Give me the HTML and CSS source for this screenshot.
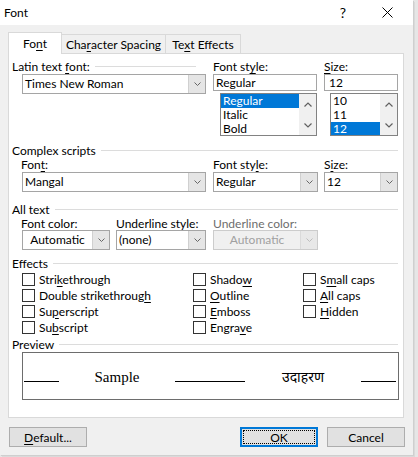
FILE: index.html
```html
<!DOCTYPE html>
<html>
<head>
<meta charset="utf-8">
<title>Font</title>
<link rel="stylesheet" href="styles.css">
</head>
<body>
<div class="window">
  <div class="titlebar">
    <span class="title">Font</span>
    <span class="help">?</span>
    <span class="close"><svg width="11" height="11" viewBox="0 0 11 11"><path d="M0.5 0.5 L10.5 10.5 M10.5 0.5 L0.5 10.5" stroke="#000" stroke-width="1" fill="none"/></svg></span>
  </div>

  <div class="tabs">
    <div class="tab active tab-font">Fo<u>n</u>t</div>
    <div class="tab tab-char">Cha<u>r</u>acter Spacing</div>
    <div class="tab tab-fx">Te<u>x</u>t Effects</div>
  </div>

  <div class="panel">
    <!-- Latin -->
    <div class="grid3 labels-row">
      <div class="hdr"><span>Latin text <u>f</u>ont:</span><span class="line line-latin"></span></div>
      <div>Font st<u>y</u>le:</div>
      <div class="lbl-size"><u>S</u>ize:</div>
    </div>
    <div class="grid3">
      <div>
        <div class="combo wide">
          <span class="val">Times New Roman</span>
          <span class="btn"><svg width="7" height="4" viewBox="0 0 7 4"><path d="M0.5 0.5 L3.5 3.5 L6.5 0.5" stroke="#666" fill="none"/></svg></span>
        </div>
      </div>
      <div>
        <div class="edit edit-style">Regular</div>
        <div class="list list-style">
          <div class="items">
            <div class="item sel">Regular</div>
            <div class="item">Italic</div>
            <div class="item">Bold</div>
          </div>
          <div class="sb">
            <svg width="8" height="5" viewBox="0 0 8 5"><path d="M0.5 4.5 L4 1 L7.5 4.5" stroke="#606060" stroke-width="1.2" fill="none"/></svg>
            <svg width="8" height="5" viewBox="0 0 8 5"><path d="M0.5 0.5 L4 4 L7.5 0.5" stroke="#606060" stroke-width="1.2" fill="none"/></svg>
          </div>
        </div>
      </div>
      <div>
        <div class="edit edit-size">12</div>
        <div class="list list-size">
          <div class="items">
            <div class="item">10</div>
            <div class="item">11</div>
            <div class="item sel">12</div>
          </div>
          <div class="sb">
            <svg width="8" height="5" viewBox="0 0 8 5"><path d="M0.5 4.5 L4 1 L7.5 4.5" stroke="#606060" stroke-width="1.2" fill="none"/></svg>
            <svg width="8" height="5" viewBox="0 0 8 5"><path d="M0.5 0.5 L4 4 L7.5 0.5" stroke="#606060" stroke-width="1.2" fill="none"/></svg>
          </div>
        </div>
      </div>
    </div>

    <!-- Complex scripts -->
    <div class="hdr sec sec-complex"><span>Complex scripts</span><span class="line"></span></div>
    <div class="grid3 sublabels">
      <div class="sub-a">Fon<u>t</u>:</div>
      <div>Font sty<u>l</u>e:</div>
      <div class="lbl-size">S<u>i</u>ze:</div>
    </div>
    <div class="grid3">
      <div>
        <div class="combo wide">
          <span class="val">Mangal</span>
          <span class="btn"><svg width="7" height="4" viewBox="0 0 7 4"><path d="M0.5 0.5 L3.5 3.5 L6.5 0.5" stroke="#666" fill="none"/></svg></span>
        </div>
      </div>
      <div>
        <div class="combo combo-style">
          <span class="val">Regular</span>
          <span class="btn"><svg width="7" height="4" viewBox="0 0 7 4"><path d="M0.5 0.5 L3.5 3.5 L6.5 0.5" stroke="#666" fill="none"/></svg></span>
        </div>
      </div>
      <div>
        <div class="combo combo-size">
          <span class="val">12</span>
          <span class="btn"><svg width="7" height="4" viewBox="0 0 7 4"><path d="M0.5 0.5 L3.5 3.5 L6.5 0.5" stroke="#666" fill="none"/></svg></span>
        </div>
      </div>
    </div>

    <!-- All text -->
    <div class="hdr sec sec-all"><span>All text</span><span class="line"></span></div>
    <div class="grid-all sublabels2">
      <div class="sub-a">Font <u>c</u>olor:</div>
      <div><u>U</u>nderline style:</div>
      <div class="disabled-lbl">Underline color:</div>
    </div>
    <div class="grid-all">
      <div>
        <div class="combo combo-color">
          <span class="val center">Automatic</span>
          <span class="btn"><svg width="7" height="4" viewBox="0 0 7 4"><path d="M0.5 0.5 L3.5 3.5 L6.5 0.5" stroke="#666" fill="none"/></svg></span>
        </div>
      </div>
      <div>
        <div class="combo combo-ul">
          <span class="val">(none)</span>
          <span class="btn"><svg width="7" height="4" viewBox="0 0 7 4"><path d="M0.5 0.5 L3.5 3.5 L6.5 0.5" stroke="#666" fill="none"/></svg></span>
        </div>
      </div>
      <div>
        <div class="combo combo-ulc disabled">
          <span class="val center">Automatic</span>
          <span class="btn"><svg width="7" height="4" viewBox="0 0 7 4"><path d="M0.5 0.5 L3.5 3.5 L6.5 0.5" stroke="#bdbdbd" fill="none"/></svg></span>
        </div>
      </div>
    </div>

    <!-- Effects -->
    <div class="hdr sec sec-fx"><span>Effects</span><span class="line"></span></div>
    <div class="effects">
      <label class="cb"><span class="box"></span><span>Stri<u>k</u>ethrough</span></label>
      <label class="cb"><span class="box"></span><span>Shado<u>w</u></span></label>
      <label class="cb"><span class="box"></span><span>S<u>m</u>all caps</span></label>
      <label class="cb"><span class="box"></span><span>Double strikethroug<u>h</u></span></label>
      <label class="cb"><span class="box"></span><span><u>O</u>utline</span></label>
      <label class="cb"><span class="box"></span><span><u>A</u>ll caps</span></label>
      <label class="cb"><span class="box"></span><span>Su<u>p</u>erscript</span></label>
      <label class="cb"><span class="box"></span><span><u>E</u>mboss</span></label>
      <label class="cb"><span class="box"></span><span><u>H</u>idden</span></label>
      <label class="cb"><span class="box"></span><span>Su<u>b</u>script</span></label>
      <label class="cb"><span class="box"></span><span>Engra<u>v</u>e</span></label>
      <span></span>
    </div>

    <!-- Preview -->
    <div class="hdr sec sec-prev"><span>Preview</span><span class="line"></span></div>
    <div class="preview">
      <span class="ul ul-short"></span>
      <span class="ptext latin">Sample</span>
      <span class="ul ul-long"></span>
      <span class="ptext deva">उदाहरण</span>
      <span class="ul ul-short"></span>
    </div>
  </div>

  <div class="buttons">
    <div class="button"><span><u>D</u>efault...</span></div>
    <div class="spacer"></div>
    <div class="button primary"><span class="focus">OK</span></div>
    <div class="button">Cancel</div>
  </div>
</div>
</body>
</html>
```

FILE: styles.css
```css
* { box-sizing: border-box; }
html, body { margin: 0; padding: 0; }
body {
  width: 418px;
  height: 457px;
  overflow: hidden;
  background: #e6e6e6;
  font-family: Lato, "Noto Sans", "Liberation Sans", sans-serif;
  font-size: 12px;
  color: #000;
}
u { text-decoration: underline; text-underline-offset: 2px; }

.window {
  width: 413px;
  height: 455px;
  background: #f0f0f0;
  box-shadow: 1px 1px 0 #cfcfcf, 2px 2px 0 #dadada;
}

/* title bar */
.titlebar {
  height: 25px;
  background: #fff;
  display: flex;
  align-items: center;
  padding: 0 11px 0 4px;
}
.title { flex: 1; font-size: 12px; }
.help { width: 30px; text-align: center; font-size: 14px; }
.close { width: 30px; margin-left: 14px; display: flex; justify-content: center; }

/* tabs */
.tabs {
  display: flex;
  align-items: flex-end;
  height: 21px;
  margin-top: 7px;
  padding-left: 8px;
}
.tab {
  height: 19px;
  border: 1px solid #d9d9d9;
  border-bottom: none;
  background: #f0f0f0;
  display: flex;
  align-items: center;
  justify-content: center;
}
.tab + .tab { border-left: none; }
.tab.active {
  height: 22px;
  margin-bottom: -1px;
  background: #fff;
  position: relative;
  z-index: 1;
}
.tab-font { width: 54px; }
.tab-char { width: 104px; }
.tab-fx { width: 75px; }

/* panel */
.panel {
  margin-left: 8px;
  width: 396px;
  height: 365px;
  border: 1px solid #d9d9d9;
  background: #fff;
  padding: 5px 0 0 3px;
}

.hdr { display: flex; align-items: center; height: 15px; line-height: 15px; }
.hdr .line { flex: 1; height: 1px; background: #dcdcdc; margin-left: 5px; }
.line-latin { margin-right: 17px; }
.sec { width: 386px; }

.grid3 { display: grid; grid-template-columns: 201px 110px 75px; }
.labels-row { height: 15px; line-height: 15px; }
.lbl-size { padding-left: 1px; }

.sec-complex { margin-top: 7px; }
.sublabels { height: 14px; line-height: 14px; }
.sub-a { padding-left: 9px; }

.sec-all { margin-top: 10px; }
.sublabels2 { height: 13px; line-height: 13px; }
.grid-all { display: grid; grid-template-columns: 104px 97px 110px; }
.disabled-lbl { color: #6d6d6d; }

/* combos */
.combo {
  height: 20px;
  border: 1px solid #a5a5a5;
  background: #fff;
  display: flex;
}
.combo .val {
  flex: 1;
  padding-left: 2px;
  line-height: 18px;
  white-space: nowrap;
  overflow: hidden;
}
.combo .val.center { text-align: center; padding-left: 0; }
.combo .btn {
  width: 17px;
  background: #e5e5e5;
  border-left: 1px solid #d0d0d0;
  display: flex;
  align-items: center;
  justify-content: center;
}
.combo.wide { margin-left: 10px; width: 184px; }
.combo-style { width: 105px; }
.combo-size { width: 74px; margin-left: 1px; }
.combo-color { margin-left: 10px; width: 88px; }
.combo-ul { width: 90px; }
.combo-ulc { width: 105px; }
.combo.disabled { background: #f0f0f0; border-color: #cccccc; color: #a0a0a0; }
.combo.disabled .btn { background: #e8e8e8; border-left-color: #dadada; }

/* edit + list */
.edit {
  height: 17px;
  border: 1px solid #a5a5a5;
  padding-left: 2px;
  line-height: 15px;
}
.edit-style { width: 104px; }
.edit-size { width: 74px; margin-left: 1px; padding-left: 4px; }
.list {
  margin-top: 2px;
  margin-left: 7px;
  height: 43px;
  border: 1px solid #828282;
  display: flex;
  overflow: hidden;
}
.list-style { width: 97px; }
.list-size { width: 68px; }
.list .items { flex: 1; }
.item { height: 14px; line-height: 14px; padding-left: 2px; white-space: nowrap; }
.item:last-child { height: 13px; line-height: 13px; }
.item.sel { background: #0078d7; color: #fff; }
.sb {
  width: 17px;
  background: #f0f0f0;
  display: flex;
  flex-direction: column;
  align-items: center;
  justify-content: space-between;
  padding: 8px 0 7px;
}

/* effects */
.sec-fx { margin-top: 6px; }
.effects {
  margin-left: 10px;
  display: grid;
  grid-template-columns: 171px 110px 1fr;
  grid-auto-rows: 16px;
}
.cb { display: flex; align-items: center; gap: 4px; height: 16px; }
.box { width: 13px; height: 13px; border: 1px solid #333; background: #fff; flex: none; }

/* preview */
.sec-prev { margin-top: 2px; }
.preview {
  margin-left: 10px;
  width: 377px;
  height: 48px;
  border: 1px solid #6d6d6d;
  display: flex;
  align-items: baseline;
  gap: 35.5px;
  padding: 16px 0 0 1px;
}
.ul { display: block; height: 0; border-bottom: 1px solid #000; flex: none; }
.ul-short { width: 35px; }
.ul-long { width: 70px; }
.ptext { width: 45px; text-align: center; white-space: nowrap; line-height: 17px; flex: none; }
.latin { font-family: "Liberation Serif", "Times New Roman", serif; font-size: 15px; }
.deva { font-family: "Noto Sans Devanagari", "Noto Serif Devanagari", "Lohit Devanagari", Mangal, FreeSans, FreeSerif, sans-serif; font-size: 14px; }

/* buttons */
.buttons {
  display: flex;
  margin-top: 9px;
  padding: 0 8px 0 9px;
  gap: 9px;
}
.spacer { flex: 1; }
.button {
  width: 78px;
  height: 20px;
  background: #e1e1e1;
  border: 1px solid #adadad;
  display: flex;
  align-items: center;
  justify-content: center;
}
.button.primary { border: 2px solid #0078d7; padding: 1px; }
.focus {
  flex: 1;
  align-self: stretch;
  border: 1px dotted #000;
  display: flex;
  align-items: center;
  justify-content: center;
}
```
